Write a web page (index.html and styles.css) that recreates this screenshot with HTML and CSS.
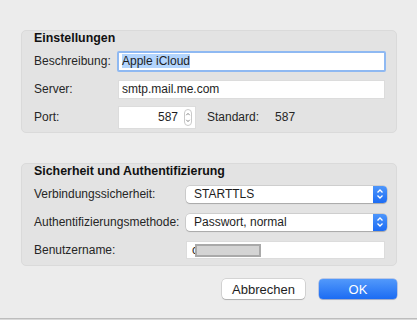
FILE: index.html
```html
<!DOCTYPE html>
<html>
<head>
	<meta charset="utf-8">
	<meta name="viewport" content="width=device-width, initial-scale=1">
	<title>Accounteinstellungen</title>
	<link rel="stylesheet" href="styles.css">
</head>
<body>
	<div class=dialog>
		<section class="group general">
			<h2>Einstellungen</h2>
			<div class=rows>
				<label>Beschreibung:</label>
				<div class="field focused"><span class=sel>Apple iCloud</span></div>

				<label>Server:</label>
				<div class=field>smtp.mail.me.com</div>

				<label>Port:</label>
				<div class=portline>
					<div class="field port">
						<span>587</span>
						<svg class=stepper width="8" height="17" viewBox="0 0 8 17">
							<rect x="0.5" y="0.5" width="7" height="16" rx="3.5" fill="#fff" stroke="#c9c9c9"/>
							<path d="M2.3 6.2 L4 4.4 L5.7 6.2 M2.3 10.8 L4 12.6 L5.7 10.8" fill="none" stroke="#7a7a7a" stroke-width="0.9"/>
						</svg>
					</div>
					<span class=std>Standard:</span>
					<span class=stdval>587</span>
				</div>
			</div>
		</section>

		<section class="group security">
			<h2>Sicherheit und Authentifizierung</h2>
			<div class=rows>
				<label>Verbindungssicherheit:</label>
				<div class=popup>
					<span>STARTTLS</span>
					<span class=arrows>
						<svg width="8" height="12" viewBox="0 0 8 12"><path d="M1.5 4.5 L4 2 L6.5 4.5 M1.5 7.5 L4 10 L6.5 7.5" fill="none" stroke="#fff" stroke-width="1.3"/></svg>
					</span>
				</div>

				<label>Authentifizierungsmethode:</label>
				<div class=popup>
					<span>Passwort, normal</span>
					<span class=arrows>
						<svg width="8" height="12" viewBox="0 0 8 12"><path d="M1.5 4.5 L4 2 L6.5 4.5 M1.5 7.5 L4 10 L6.5 7.5" fill="none" stroke="#fff" stroke-width="1.3"/></svg>
					</span>
				</div>

				<label>Benutzername:</label>
				<div class="field user">c<span class=redacted></span></div>
			</div>
		</section>

		<div class=buttons>
			<button type=button class=cancel>Abbrechen</button>
			<button type=button class=ok>OK</button>
		</div>
	</div>
</body>
</html>
```

FILE: styles.css
```css
* {
	box-sizing: border-box;
}
body {
	margin: 0;
	background-color: #d9d9d9;
	color: #262626;
	font-family: "Liberation Sans", Arial, Helvetica, sans-serif;
	font-size: 12px;
}
.dialog {
	width: 417px;
	height: 319px;
	background-color: #ececec;
	border-bottom: 1px solid #bdbdbd;
	padding: 30px 20px 0 21px;
}
.group {
	background-color: #e3e3e3;
	border: 1px solid #dadada;
	border-radius: 5px;
	padding: 0 11px 1px 12px;
	height: 103px;
}
.group + .group {
	margin-top: 30px;
}
.group h2 {
	margin: 0 0 2px;
	font-size: 12.4px;
	line-height: 14px;
	font-weight: bold;
	color: #111;
}
.rows {
	display: grid;
	grid-template-columns: 84px 1fr;
	grid-auto-rows: 28px;
	align-items: center;
}
.security .rows {
	grid-template-columns: 152px 1fr;
}
.field {
	background: #fff;
	height: 19px;
	line-height: 19px;
	padding: 0 4px;
	box-shadow: inset 0 0 0 1px #dcdcdc, inset 0 1px 0 #d0d0d0;
	color: #1e1e1e;
	white-space: nowrap;
	overflow: hidden;
}
.focused {
	outline: 2px solid #8fb9f2;
	outline-offset: -1px;
	border-radius: 1px;
}
.sel {
	background: #b3d5fd;
}
.portline {
	display: flex;
	align-items: center;
}
.port {
	width: 78px;
	height: 23px;
	line-height: 23px;
	display: flex;
	justify-content: flex-end;
	align-items: center;
	padding-right: 4px;
	gap: 6px;
}
.stepper {
	display: block;
}
.std {
	margin-left: 11px;
}
.stdval {
	margin-left: 16px;
}
.popup {
	height: 17px;
	background: #fff;
	border-radius: 4px;
	box-shadow: 0 0 0 0.5px rgba(0,0,0,0.18), 0 1px 1px rgba(0,0,0,0.18);
	display: flex;
	align-items: center;
	justify-content: space-between;
	padding-left: 8px;
	color: #1e1e1e;
	margin-right: -2px;
}
.arrows {
	width: 14px;
	height: 17px;
	border-radius: 0 4px 4px 0;
	background: linear-gradient(#4d96fb, #1d6cf4);
	display: flex;
	align-items: center;
	justify-content: center;
}
.arrows svg {
	display: block;
}
.user {
	height: 18px;
	line-height: 18px;
	padding-left: 6px;
	display: flex;
	align-items: center;
}
.redacted {
	display: inline-block;
	width: 66px;
	height: 13px;
	margin-left: -3px;
	background: #d4d4d4;
	border: 2px solid #a9a9a9;
}
.buttons {
	display: flex;
	justify-content: flex-end;
	gap: 14px;
	margin-top: 13px;
	padding-right: 0;
}
.buttons button {
	font-family: inherit;
	font-size: 13px;
	height: 20px;
	border: none;
	border-radius: 4px;
	padding: 0;
	margin: 0;
}
.cancel {
	width: 83px;
	background: #fff;
	color: #1e1e1e;
	box-shadow: 0 0 0 0.5px rgba(0,0,0,0.2), 0 1px 1px rgba(0,0,0,0.18);
}
.ok {
	width: 78px;
	color: #fff;
	background: linear-gradient(#5299fb, #1c6cf3);
	box-shadow: 0 0 0 0.5px rgba(0,60,200,0.4), 0 1px 1px rgba(0,0,0,0.15);
}
```
